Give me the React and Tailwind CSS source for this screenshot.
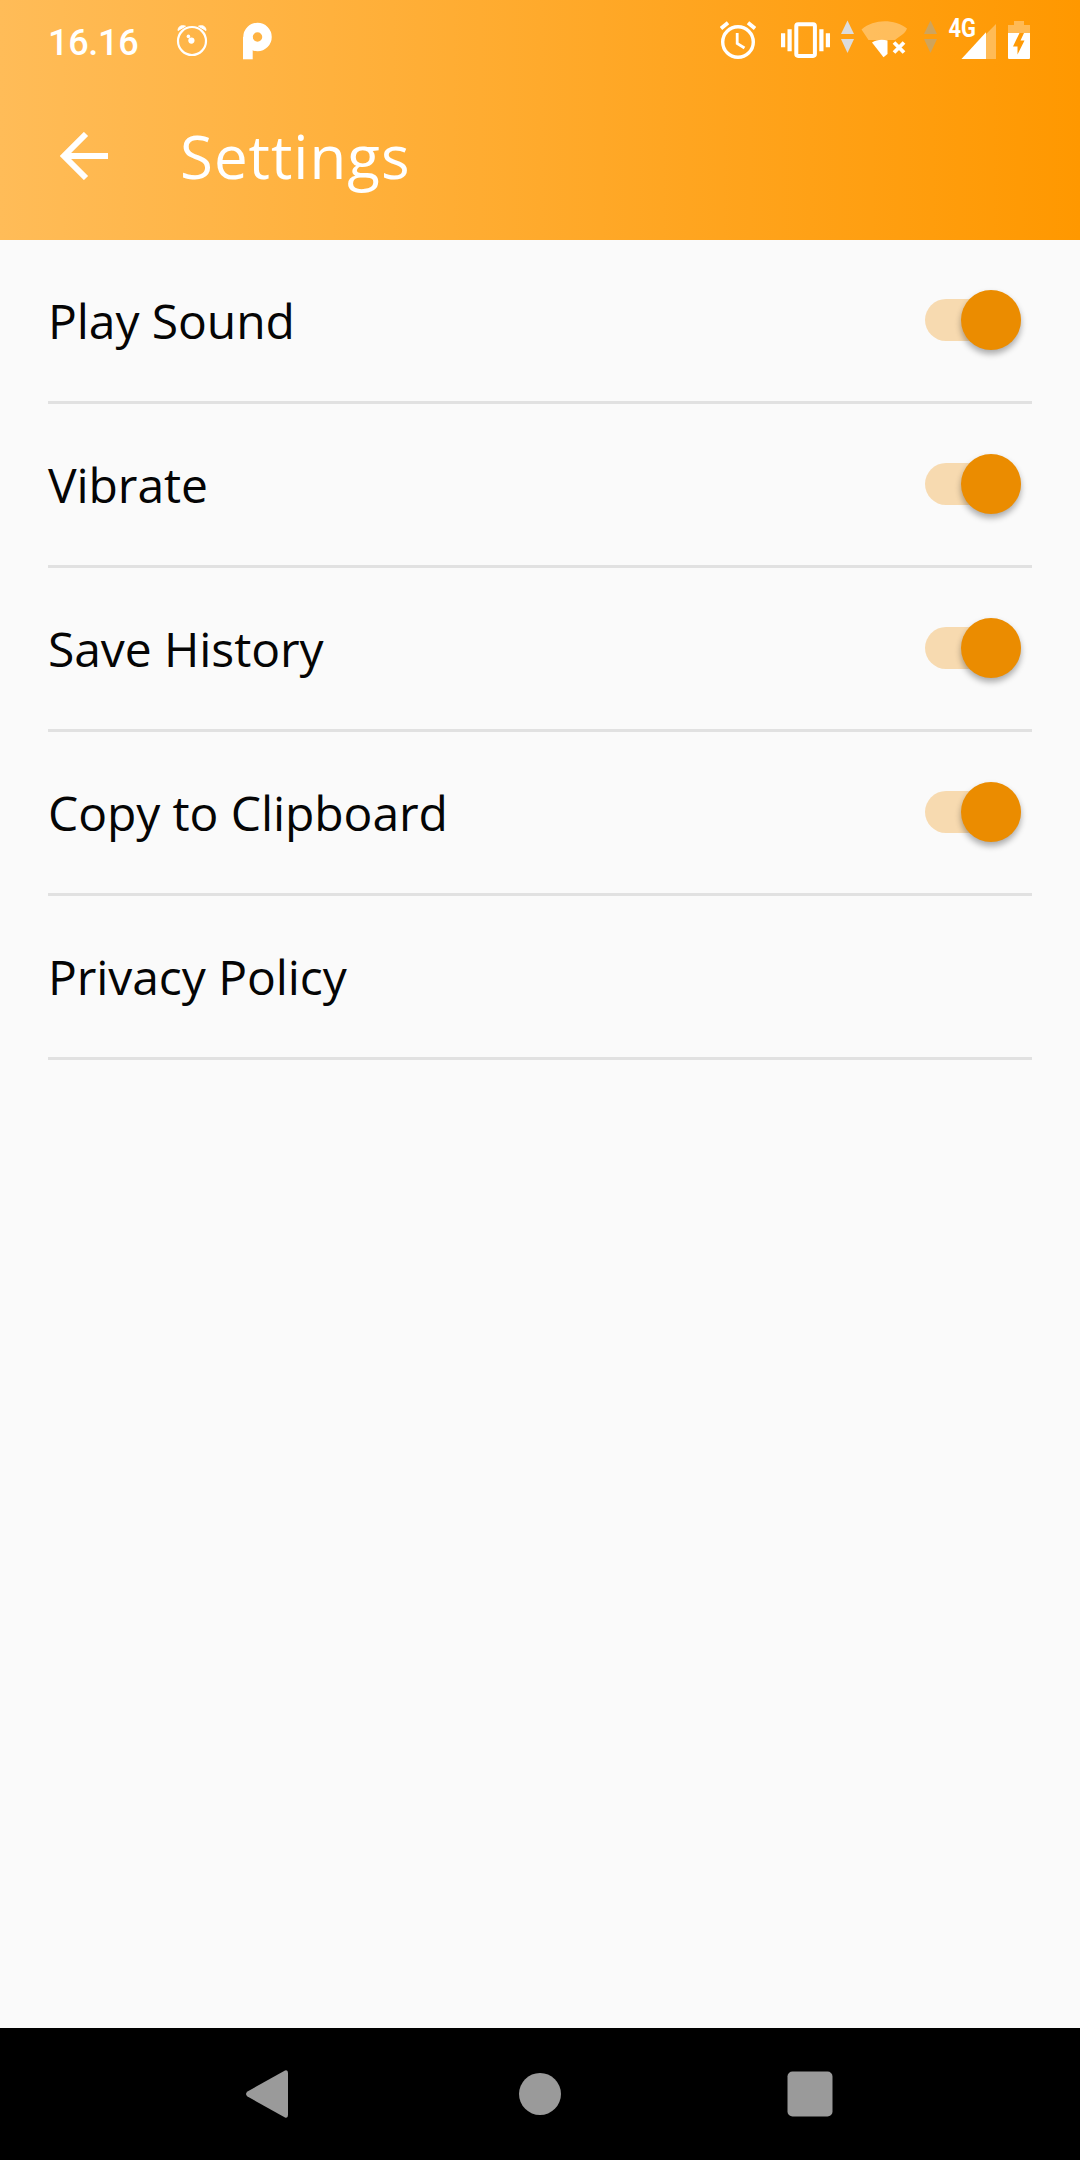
/**
 * Settings screen
 * List of toggles with the phone's status and navigation bars
 */

import { useState } from 'react'

const settings = [
  { id: 'sound', label: 'Play Sound', toggle: true },
  { id: 'vibrate', label: 'Vibrate', toggle: true },
  { id: 'history', label: 'Save History', toggle: true },
  { id: 'clipboard', label: 'Copy to Clipboard', toggle: true },
  { id: 'privacy', label: 'Privacy Policy', toggle: false },
]

function AlarmFaceIcon() {
  return (
    <svg className="ml-[37px] h-10 w-8 shrink-0" viewBox="0 0 32 40" fill="none">
      <circle cx="16" cy="21" r="14" stroke="white" strokeWidth="2.200" />
      <path d="M2 10.500C2 7 5 4.500 9.500 6.200Z" fill="white" stroke="white" />
      <path d="M30 10.500C30 7 27 4.500 22.500 6.200Z" fill="white" stroke="white" />
      <circle cx="15.400" cy="20.600" r="3.100" fill="white" />
      <circle cx="12.400" cy="16.400" r="1.800" fill="white" />
    </svg>
  )
}

function ParkingLogo() {
  return (
    <svg className="ml-[34px] h-10 w-8 shrink-0" viewBox="0 0 32 40" fill="none">
      <circle cx="15.500" cy="17" r="9.500" stroke="white" strokeWidth="9.500" />
      <path d="M1 17H10.700V39.300H1Z" fill="white" />
    </svg>
  )
}

function AlarmIcon() {
  return (
    <svg className="h-10 w-9 shrink-0" viewBox="0 0 36 40" fill="none" stroke="white">
      <circle cx="18" cy="22" r="15.300" strokeWidth="3.400" />
      <path d="M17.200 13V23.500L24.500 28" strokeWidth="2.800" />
      <path d="M1 8.500L8 2.800M28 2.800L35 8.500" strokeWidth="3.800" />
    </svg>
  )
}

function VibrateIcon() {
  return (
    <svg className="ml-[25px] h-10 w-[49px] shrink-0" viewBox="0 0 49 40" fill="none">
      <rect x="15.300" y="4.300" width="18.600" height="31.600" rx="1.800" stroke="white" strokeWidth="4" />
      <path d="M2.100 13.300V27.300M46.900 13.300V27.300M8.600 9.300V31.300M40.400 9.300V31.300" stroke="white" strokeWidth="4.200" />
    </svg>
  )
}

function DataArrows({ className, color }) {
  return (
    <svg className={`h-10 w-[13px] shrink-0 ${className}`} viewBox="0 0 13 40" fill={color}>
      <path d="M6.500 0.500L13 14H0Z" />
      <path d="M6.500 33L13 19H0Z" />
    </svg>
  )
}

function WifiIcon() {
  return (
    <svg className="ml-[7px] h-10 w-[47px] shrink-0" viewBox="0 0 47 40" fill="none">
      <path d="M0.500 9.500C13 -1.200 33 -1.200 46 8.500C44 14 38 16.500 34 20H7.500Z" fill="white" fillOpacity="0.320" />
      <path d="M11 22.500C15.500 19.300 22 19.300 26.500 20.500V34L22.500 37.300Z" fill="white" />
      <path d="M33 22.500L43 32.500M43 22.500L33 32.500" stroke="white" strokeWidth="3.800" />
    </svg>
  )
}

function SignalIcon() {
  return (
    <svg className="ml-[11px] h-10 w-12 shrink-0 overflow-visible" viewBox="0 0 48 40" fill="none">
      <path d="M13.500 39L48 4V39Z" fill="white" fillOpacity="0.320" />
      <path d="M13.500 39L38 12.300V39Z" fill="white" />
      <text
        x="0.500"
        y="17.300"
        fill="white"
        fontFamily="Roboto, sans-serif"
        fontSize="25"
        fontWeight="700"
        textLength="27.500"
        lengthAdjust="spacingAndGlyphs"
      >
        4G
      </text>
    </svg>
  )
}

function BatteryIcon() {
  return (
    <svg className="ml-3 h-10 w-[22px] shrink-0" viewBox="0 0 22 40" fill="none">
      <path d="M0 13V5H6V1H16V5H22V13Z" fill="white" fillOpacity="0.320" />
      <path
        fillRule="evenodd"
        d="M0 13H11.500L5 26.500H9.500V34.500L16.500 20.500H12.500L16 13H22V37.500C22 38.500 21.500 39 20.500 39H1.500C0.500 39 0 38.500 0 37.500Z"
        fill="white"
      />
    </svg>
  )
}

function StatusBar() {
  return (
    <div className="flex h-[76px] items-start justify-between pt-5 pr-[50px] pl-12">
      <div className="flex">
        <span className="w-[91px] font-[Roboto,sans-serif] text-[36px] leading-[47px] font-medium tracking-[-0.3px] whitespace-nowrap text-white">
          16.16
        </span>
        <AlarmFaceIcon />
        <ParkingLogo />
      </div>
      <div className="flex">
        <AlarmIcon />
        <VibrateIcon />
        <DataArrows className="ml-[11px]" color="#dcdcdc" />
        <WifiIcon />
        <DataArrows className="ml-4" color="#cfa45c" />
        <SignalIcon />
        <BatteryIcon />
      </div>
    </div>
  )
}

function Switch({ checked, onChange, label }) {
  return (
    <button
      type="button"
      role="switch"
      aria-checked={checked}
      aria-label={label}
      onClick={onChange}
      className="mr-[11px] mb-px flex h-[60px] w-24 items-center"
    >
      <span
        className={`flex h-[42px] w-full items-center rounded-full ${
          checked ? 'justify-end bg-[#f7dab0]' : 'justify-start bg-gray-300'
        }`}
      >
        <span
          className={`size-[60px] shrink-0 rounded-full shadow-[0_4px_6px_rgba(0,0,0,0.32)] ${
            checked ? 'bg-[#eb8c00]' : 'bg-gray-50'
          }`}
        />
      </span>
    </button>
  )
}

export default function App() {
  const [values, setValues] = useState({
    sound: true,
    vibrate: true,
    history: true,
    clipboard: true,
  })

  const handleToggle = (id) => {
    setValues({ ...values, [id]: !values[id] })
  }

  return (
    <div className="flex h-[2160px] w-[1080px] flex-col overflow-hidden bg-[#fafafa] font-['Open_Sans',sans-serif]">
      {/* Header */}
      <header className="h-60 bg-linear-to-r/srgb from-[#ffbc58] to-[#ff9800]">
        <StatusBar />
        <div className="flex h-40 items-center pl-[60px]">
          <button type="button" aria-label="Back">
            <svg className="block size-12" viewBox="0 0 48 48" fill="none" stroke="white" strokeWidth="6">
              <path d="M48 24H6M26 2L4 24L26 46" />
            </svg>
          </button>
          <h1 className="ml-[72px] text-[60px] leading-[82px] tracking-[1px] text-white">Settings</h1>
        </div>
      </header>

      {/* Options */}
      <main className="flex-1 px-12">
        {settings.map((item) => (
          <div
            key={item.id}
            className="flex h-[164px] items-center justify-between border-b-3 border-[#e1e1e1]"
          >
            <span className="text-[48px] leading-[66px] tracking-[-0.08px] text-[#050505]">{item.label}</span>
            {item.toggle && (
              <Switch
                label={item.label}
                checked={values[item.id]}
                onChange={() => handleToggle(item.id)}
              />
            )}
          </div>
        ))}
      </main>

      {/* Navigation bar */}
      <nav className="flex h-[132px] items-center justify-center gap-[222px] bg-black">
        <svg className="size-12" viewBox="0 0 48 48" fill="#9a9a9a">
          <path d="M39 0.500Q42 -0.500 42 3V45Q42 48.500 39 47.500L1.500 26.500Q-1.500 24 1.500 21.500Z" />
        </svg>
        <svg className="size-12" viewBox="0 0 48 48" fill="#9a9a9a">
          <circle cx="24" cy="24" r="21" />
        </svg>
        <svg className="size-12" viewBox="0 0 48 48" fill="#9a9a9a">
          <rect x="1.500" y="1.500" width="45" height="45" rx="5" />
        </svg>
      </nav>
    </div>
  )
}
